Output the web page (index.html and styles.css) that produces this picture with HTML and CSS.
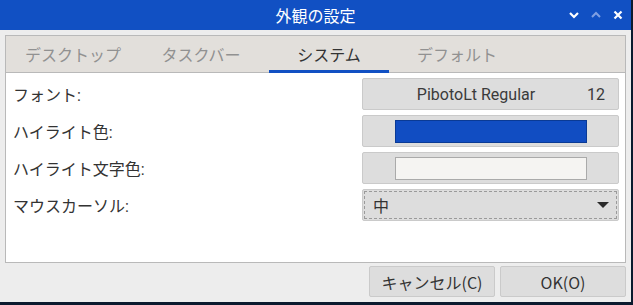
FILE: index.html
```html
<!DOCTYPE html>
<html lang="ja">
<head>
    <meta charset="UTF-8">
    <title>外観の設定</title>
    <link rel="stylesheet" href="styles.css">
</head>
<body>
    <div class="window">
        <div class="titlebar">
            <span class="title">外観の設定</span>
            <div class="win-buttons">
                <svg class="wb" width="12" height="12" viewBox="0 0 12 12"><path d="M2 4 L6 8 L10 4" fill="none" stroke="#fff" stroke-width="2.2"/></svg>
                <svg class="wb dim" width="12" height="12" viewBox="0 0 12 12"><path d="M2 8 L6 4 L10 8" fill="none" stroke="#7f9fe2" stroke-width="2"/></svg>
                <svg class="wb" width="12" height="12" viewBox="0 0 12 12"><path d="M2.5 2.5 L9.5 9.5 M9.5 2.5 L2.5 9.5" fill="none" stroke="#fff" stroke-width="2.2"/></svg>
            </div>
        </div>

        <div class="notebook">
            <div class="tabs">
                <div class="tab">デスクトップ</div>
                <div class="tab">タスクバー</div>
                <div class="tab active">システム</div>
                <div class="tab">デフォルト</div>
            </div>
            <div class="page">
                <div class="row-label">フォント:</div>
                <div class="btn font-btn">
                    <span class="font-name">PibotoLt Regular</span>
                    <span class="font-size">12</span>
                </div>

                <div class="row-label">ハイライト色:</div>
                <div class="btn color-btn"><span class="swatch swatch-blue"></span></div>

                <div class="row-label">ハイライト文字色:</div>
                <div class="btn color-btn"><span class="swatch swatch-white"></span></div>

                <div class="row-label">マウスカーソル:</div>
                <div class="btn combo">
                    <div class="combo-inner">
                        <span>中</span>
                        <span class="arrow"></span>
                    </div>
                </div>
            </div>
        </div>

        <div class="actions">
            <div class="btn action">キャンセル(C)</div>
            <div class="btn action">OK(O)</div>
        </div>
    </div>
</body>
</html>
```

FILE: styles.css
```css
body {
    margin: 0;
    background-color: #0b1a2e;
    font-family: Roboto, "Noto Sans CJK JP", sans-serif;
    font-size: 16px;
    color: #333;
}

.window {
    width: 631px;
    height: 302px;
    background: #ededed;
    display: flex;
    flex-direction: column;
}

.titlebar {
    height: 30px;
    background: #1150c3;
    color: #fff;
    position: relative;
    display: flex;
    align-items: center;
    justify-content: center;
}

.title {
    font-family: "Noto Sans CJK JP", sans-serif;
    font-size: 16px;
}

.win-buttons {
    position: absolute;
    right: 7px;
    top: 9px;
    display: flex;
    gap: 10px;
}

.notebook {
    margin: 5px 5px 0 5px;
    height: 228px;
    box-sizing: border-box;
    border: 1px solid #b9b9b9;
    display: flex;
    flex-direction: column;
}

.tabs {
    height: 36px;
    background: #e2dfdb;
    border-bottom: 1px solid #b9b9b9;
    display: flex;
    gap: 8px;
    padding-left: 7px;
}

.tab {
    width: 120px;
    height: 37px;
    box-sizing: border-box;
    margin-bottom: -1px;
    border-bottom: 3px solid transparent;
    display: flex;
    align-items: center;
    justify-content: center;
    padding-top: 2px;
    color: #919191;
    font-family: "Noto Sans CJK JP", sans-serif;
}

.tab.active {
    color: #333;
    border-bottom-color: #1150c3;
}

.page {
    flex: 1;
    background: #fff;
    padding: 5px 6px 0 7px;
    display: grid;
    grid-template-columns: 1fr 257px;
    grid-auto-rows: 32px;
    row-gap: 5px;
    align-content: start;
}

.row-label {
    display: flex;
    align-items: center;
}

.btn {
    box-sizing: border-box;
    background: #dddddd;
    border: 1px solid #cacaca;
    border-radius: 2px;
    display: flex;
    align-items: center;
}

.font-btn {
    padding: 0 13px 0 10px;
    color: #3a3a3a;
}

.font-name {
    flex: 1;
    text-align: center;
}

.font-size {
    margin-left: 8px;
}

.color-btn {
    justify-content: center;
}

.swatch {
    width: 192px;
    height: 23px;
    box-sizing: border-box;
    margin-left: 1px;
}

.swatch-blue {
    background: #114dc2;
    border: 1px solid #0a3a95;
}

.swatch-white {
    background: #f5f4f2;
    border: 1px solid #aaaaaa;
}

.combo {
    padding: 1px;
}

.combo-inner {
    flex: 1;
    align-self: stretch;
    border: 1px dashed #9a9a9a;
    display: flex;
    align-items: center;
    justify-content: space-between;
    padding: 0 7px 0 8px;
    font-family: "Noto Sans CJK JP", sans-serif;
}

.arrow {
    width: 0;
    height: 0;
    border-left: 6px solid transparent;
    border-right: 6px solid transparent;
    border-top: 6px solid #2a2a2a;
}

.actions {
    margin: 3px 5px 0 0;
    display: flex;
    justify-content: flex-end;
    gap: 5px;
}

.action {
    width: 126px;
    height: 31px;
    justify-content: center;
    font-family: "Noto Sans CJK JP", sans-serif;
}
```
